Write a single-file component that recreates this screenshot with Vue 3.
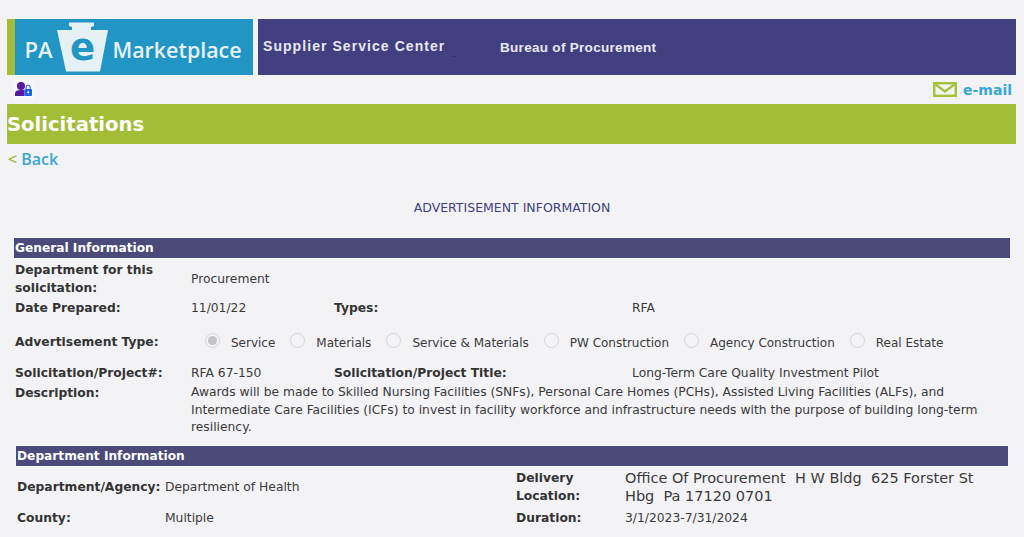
<script setup>
const radios = [
  { label: 'Service', checked: true },
  { label: 'Materials' },
  { label: 'Service & Materials' },
  { label: 'PW Construction' },
  { label: 'Agency Construction' },
  { label: 'Real Estate' },
]
</script>

<template>
  <div class="page">
    <header class="banner">
      <div class="logo">
        <svg width="246" height="56" viewBox="0 0 246 56">
          <rect width="246" height="56" fill="#2196c4" />
          <rect width="8" height="56" fill="#a3bd37" />
          <text x="17.500" y="39" class="pa">PA</text>
          <path d="M62 3.500H87V7L84 8V11H101L93 52.500H59L50 11H65V8L62 7Z" fill="#e6f1f5" />
          <text x="75.500" y="41" text-anchor="middle" class="e">e</text>
          <text x="105.500" y="38.500" class="mk">Marketplace</text>
        </svg>
      </div>
      <div class="title-bar">
        <span class="ssc">Supplier Service Center</span>
        <span class="bop">Bureau of Procurement</span>
        <i class="tick"></i>
      </div>
    </header>

    <div class="tools">
      <svg class="user" width="20" height="19" viewBox="0 0 20 19">
        <rect width="20" height="19" fill="#f8f8fb" />
        <circle cx="7" cy="6" r="4" fill="#5a169e" />
        <path d="M1 16V13.500C1 11 3 10 7 10H10.500V16Z" fill="#5a169e" />
        <rect x="10.500" y="9" width="7.500" height="7" rx="1" fill="#1c62e6" />
        <path d="M12.200 9V7.200a2 2 0 0 1 4 0V9" fill="none" stroke="#1c62e6" stroke-width="1.100" />
        <circle cx="14.200" cy="12.300" r="1.100" fill="#f8f8fb" />
      </svg>
      <a class="mail">
        <svg width="24" height="15" viewBox="0 0 24 15">
          <rect x="1.200" y="1.200" width="21.600" height="12.600" fill="#f3f3f6" stroke="#a3c23c" stroke-width="2.400" />
          <path d="M2 2L12 9.500L22 2" fill="none" stroke="#a3c23c" stroke-width="2.200" />
        </svg>
        <span>e-mail</span>
      </a>
    </div>

    <h1 class="heading">Solicitations</h1>

    <div class="back"><span class="lt">&lt;</span><span>Back</span></div>

    <div class="ad-title">ADVERTISEMENT INFORMATION</div>

    <section class="general">
      <h2 class="bar">General Information</h2>
      <div class="row row-dept">
        <div class="lbl narrow">Department for this solicitation:</div>
        <div>Procurement</div>
      </div>
      <div class="row row-date">
        <div class="lbl">Date Prepared:</div>
        <div>11/01/22</div>
        <div class="lbl">Types:</div>
        <div>RFA</div>
      </div>
      <div class="row row-ad">
        <div class="lbl">Advertisement Type:</div>
        <div class="radios">
          <label v-for="r in radios" :key="r.label" class="radio">
            <span class="dot" :class="{ on: r.checked }"></span>
            <span>{{ r.label }}</span>
          </label>
        </div>
      </div>
      <div class="row row-sol">
        <div class="lbl">Solicitation/Project#:</div>
        <div>RFA 67-150</div>
        <div class="lbl">Solicitation/Project Title:</div>
        <div>Long-Term Care Quality Investment Pilot</div>
      </div>
      <div class="row row-desc">
        <div class="lbl">Description:</div>
        <div class="desc">Awards will be made to Skilled Nursing Facilities (SNFs), Personal Care Homes (PCHs), Assisted Living Facilities (ALFs), and Intermediate Care Facilities (ICFs) to invest in facility workforce and infrastructure needs with the purpose of building long-term resiliency.</div>
      </div>
    </section>

    <section class="dept">
      <h2 class="bar">Department Information</h2>
      <div class="dept-grid">
        <div class="lbl">Department/Agency:</div>
        <div>Department of Health</div>
        <div class="lbl narrow2">Delivery Location:</div>
        <div class="big">Office Of Procurement&nbsp; H W Bldg&nbsp; 625 Forster St Hbg&nbsp; Pa 17120 0701</div>
        <div class="lbl">County:</div>
        <div>Multiple</div>
        <div class="lbl">Duration:</div>
        <div>3/1/2023-7/31/2024</div>
      </div>
    </section>
  </div>
</template>

<style>
html, body { margin: 0; background: #f3f3f6; }
</style>

<style scoped>
.page {
  height: 537px;
  overflow: hidden;
  background: #f3f3f6;
  font-family: "DejaVu Sans", Verdana, sans-serif;
  font-size: 12.300px;
  color: #3a3a3a;
  box-sizing: border-box;
  padding-top: 19px;
}
.banner { display: flex; gap: 5px; margin: 0 8px 0 7px; height: 56px; }
.logo { width: 246px; height: 56px; flex: none; }
.logo svg { display: block; }
.pa { font: 600 22px "Open Sans", sans-serif; fill: #e6f1f5; }
.mk { font: 600 21.400px "Open Sans", sans-serif; fill: #e6f1f5; }
.e { font: 700 37px "DejaVu Sans", sans-serif; fill: #2196c4; }
.title-bar {
  flex: 1;
  background: #413f7f;
  color: #e8e8f2;
  font-family: "Liberation Sans", Arial, sans-serif;
  font-weight: 700;
  position: relative;
  display: flex;
  align-items: center;
  padding-left: 5px;
  padding-bottom: 2px;
  box-sizing: border-box;
}
.ssc { font-size: 14px; letter-spacing: 1.060px; width: 237px; }
.bop { font-size: 13.500px; letter-spacing: 0.300px; position: relative; top: 1px; }
.tick {
  position: absolute;
  left: 194px;
  top: 37px;
  width: 4px;
  height: 1px;
  background: #33335f;
}
.tools {
  height: 29px;
  display: flex;
  justify-content: space-between;
  align-items: center;
  margin: 0 12px 0 14px;
}
.user { display: block; }
.mail {
  display: flex;
  align-items: center;
  gap: 6px;
  color: #3aa6d0;
  font-weight: 700;
  font-size: 14px;
}
.heading {
  margin: 0 8px 0 7px;
  height: 40px;
  line-height: 41px;
  background: #a3bd37;
  color: #fff;
  font-size: 19.600px;
  font-weight: 700;
}
.back {
  display: flex;
  gap: 4px;
  margin: 6px 0 0 8px;
  height: 19px;
  line-height: 19px;
  font-family: "Open Sans", sans-serif;
  font-weight: 600;
  font-size: 16px;
  color: #3aa6d0;
}
.lt { color: #a3bd37; }
.ad-title {
  margin-top: 31px;
  text-align: center;
  color: #413f7f;
  font-size: 12.500px;
  height: 15px;
  line-height: 15px;
}
.bar {
  margin: 0;
  height: 20px;
  line-height: 20px;
  background: #4b4a79;
  color: #fff;
  font-size: 12.200px;
  font-weight: 700;
  padding-left: 1px;
}
.general { margin: 23px 14px 0 14px; }
.dept { margin: 9px 16px 0 16px; }
.lbl { font-weight: 700; color: #333; }
.row {
  display: grid;
  grid-template-columns: 176px 143px 298px 1fr;
  line-height: 18px;
  padding-left: 1px;
  align-items: center;
}
.row-dept { grid-template-columns: 176px 1fr; padding-top: 3px; }
.row-date { margin-top: 2px; }
.row-ad { grid-template-columns: 176px 1fr; margin-top: 16px; }
.row-sol { margin-top: 13px; }
.row-desc { grid-template-columns: 176px 1fr; margin-top: 2px; align-items: start; }
.narrow { width: 150px; }
.desc { line-height: 17.700px; padding-right: 20px; }
.radios { display: flex; margin-left: 14px; font-size: 12px; position: relative; top: 1px; }
.radio { display: flex; align-items: center; }
.dot {
  width: 13px;
  height: 13px;
  border-radius: 50%;
  border: 1px solid #d6d6d8;
  background: #f4f4f6;
  margin-top: -5px;
  margin-right: 11px;
  position: relative;
  flex: none;
}
.dot.on::after {
  content: "";
  position: absolute;
  inset: 2px;
  border-radius: 50%;
  background: #c4c4c6;
}
.radio + .radio { margin-left: 15px; }
.dept-grid {
  display: grid;
  grid-template-columns: 148px 351px 109px 1fr;
  padding-left: 1px;
  line-height: 17.500px;
  align-items: center;
  margin-top: 4px;
  row-gap: 5px;
}
.narrow2 { width: 80px; }
.big { font-size: 14.500px; width: 372px; }
</style>
